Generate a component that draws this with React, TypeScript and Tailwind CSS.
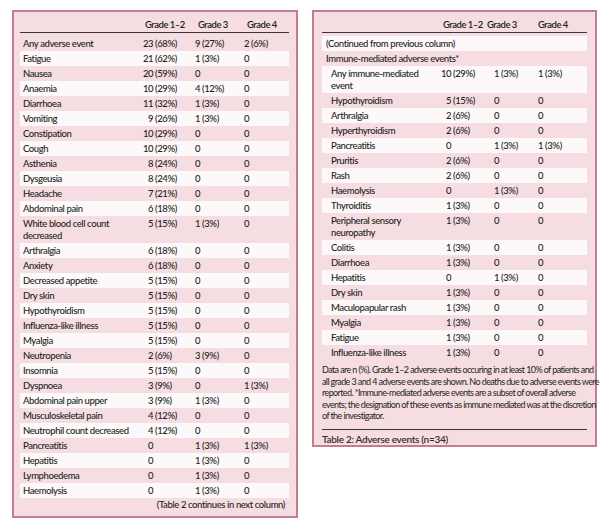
import React from "react";

type Row = [string, string, string, string];

const leftRows: Row[] = [
  ["Any adverse event", "23 (68%)", "9 (27%)", "2 (6%)"],
  ["Fatigue", "21 (62%)", "1 (3%)", "0"],
  ["Nausea", "20 (59%)", "0", "0"],
  ["Anaemia", "10 (29%)", "4 (12%)", "0"],
  ["Diarrhoea", "11 (32%)", "1 (3%)", "0"],
  ["Vomiting", "9 (26%)", "1 (3%)", "0"],
  ["Constipation", "10 (29%)", "0", "0"],
  ["Cough", "10 (29%)", "0", "0"],
  ["Asthenia", "8 (24%)", "0", "0"],
  ["Dysgeusia", "8 (24%)", "0", "0"],
  ["Headache", "7 (21%)", "0", "0"],
  ["Abdominal pain", "6 (18%)", "0", "0"],
  ["White blood cell count|decreased", "5 (15%)", "1 (3%)", "0"],
  ["Arthralgia", "6 (18%)", "0", "0"],
  ["Anxiety", "6 (18%)", "0", "0"],
  ["Decreased appetite", "5 (15%)", "0", "0"],
  ["Dry skin", "5 (15%)", "0", "0"],
  ["Hypothyroidism", "5 (15%)", "0", "0"],
  ["Influenza-like illness", "5 (15%)", "0", "0"],
  ["Myalgia", "5 (15%)", "0", "0"],
  ["Neutropenia", "2 (6%)", "3 (9%)", "0"],
  ["Insomnia", "5 (15%)", "0", "0"],
  ["Dyspnoea", "3 (9%)", "0", "1 (3%)"],
  ["Abdominal pain upper", "3 (9%)", "1 (3%)", "0"],
  ["Musculoskeletal pain", "4 (12%)", "0", "0"],
  ["Neutrophil count decreased", "4 (12%)", "0", "0"],
  ["Pancreatitis", "0", "1 (3%)", "1 (3%)"],
  ["Hepatitis", "0", "1 (3%)", "0"],
  ["Lymphoedema", "0", "1 (3%)", "0"],
  ["Haemolysis", "0", "1 (3%)", "0"],
];

const rightRows: Row[] = [
  ["Any immune-mediated|event", "10 (29%)", "1 (3%)", "1 (3%)"],
  ["Hypothyroidism", "5 (15%)", "0", "0"],
  ["Arthralgia", "2 (6%)", "0", "0"],
  ["Hyperthyroidism", "2 (6%)", "0", "0"],
  ["Pancreatitis", "0", "1 (3%)", "1 (3%)"],
  ["Pruritis", "2 (6%)", "0", "0"],
  ["Rash", "2 (6%)", "0", "0"],
  ["Haemolysis", "0", "1 (3%)", "0"],
  ["Thyroiditis", "1 (3%)", "0", "0"],
  ["Peripheral sensory|neuropathy", "1 (3%)", "0", "0"],
  ["Colitis", "1 (3%)", "0", "0"],
  ["Diarrhoea", "1 (3%)", "0", "0"],
  ["Hepatitis", "0", "1 (3%)", "0"],
  ["Dry skin", "1 (3%)", "0", "0"],
  ["Maculopapular rash", "1 (3%)", "0", "0"],
  ["Myalgia", "1 (3%)", "0", "0"],
  ["Fatigue", "1 (3%)", "0", "0"],
  ["Influenza-like illness", "1 (3%)", "0", "0"],
];

const footnote = [
  "Data are n (%). Grade 1–2 adverse events occuring in at least 10% of patients and",
  "all grade 3 and 4 adverse events are shown. No deaths due to adverse events were",
  "reported. *Immune-mediated adverse events are a subset of overall adverse",
  "events; the designation of these events as immune mediated was at the discretion",
  "of the investigator.",
];

// number right-aligned on a tab, percentage follows
const Count = ({ value }: { value: string }) => {
  const [n, ...rest] = value.split(" ");
  return (
    <span className="flex">
      <span className="w-[10px] text-right">{n}</span>
      {rest.length > 0 && <span className="pl-[2px]">{rest.join(" ")}</span>}
    </span>
  );
};

const Label = ({ text }: { text: string }) => (
  <span>
    {text.split("|").map((t, i) => (
      <span key={i} className="block">
        {t}
      </span>
    ))}
  </span>
);

const LeftTable = () => (
  <div className="w-[286px] h-[508px] border-2 border-[#c27e8c] bg-[#f5dde1] pl-[6px] pr-[7px] pt-[5px] flex flex-col">
    <div className="grid grid-cols-[123px_52px_49px_1fr] pl-[3px] leading-[12px] py-[1.5px] font-semibold tracking-[-0.5px] text-[#221e20] border-b border-[#3a3536]">
      <span />
      <span className="-ml-[1px]">Grade 1–2</span>
      <span>Grade 3</span>
      <span>Grade 4</span>
    </div>
    <div className="mt-[3px] flex flex-col">
      {leftRows.map((r, i) => (
        <div
          key={i}
          className={`grid grid-cols-[120px_52px_49px_1fr] pl-[3px] leading-[12px] py-[1.5px] ${
            i % 2 === 1 ? "bg-[#fdf8f9]" : ""
          }`}
        >
          <Label text={r[0]} />
          <Count value={r[1]} />
          <span>{r[2]}</span>
          <span>{r[3]}</span>
        </div>
      ))}
    </div>
    <div className="text-right pr-[4px] leading-[12px] mt-[1px]">(Table 2 continues in next column)</div>
  </div>
);

const RightTable = () => (
  <div className="w-[285px] h-[437px] border-2 border-[#c27e8c] bg-[#f5dde1] px-[8px] pt-[5px] flex flex-col">
    <div className="grid grid-cols-[121px_44px_51px_1fr] leading-[12px] py-[1.5px] font-semibold tracking-[-0.5px] text-[#221e20] border-b border-[#3a3536]">
      <span />
      <span>Grade 1–2</span>
      <span>Grade 3</span>
      <span>Grade 4</span>
    </div>
    <div className="mt-[3px] flex flex-col">
      <div className="leading-[12px] py-[1.5px] pl-[4px] bg-[#fdf8f9]">(Continued from previous column)</div>
      <div className="leading-[12px] py-[1.5px] pl-[4px]">Immune-mediated adverse events*</div>
      {rightRows.map((r, i) => (
        <div
          key={i}
          className={`grid grid-cols-[121px_47px_48px_1fr] leading-[12px] py-[1.5px] ${
            i % 2 === 0 ? "bg-[#fdf8f9]" : ""
          }`}
        >
          <span className="pl-[9px]">
            <Label text={r[0]} />
          </span>
          <span className="-ml-[2px]">
            <Count value={r[1]} />
          </span>
          <span className="pl-[4px]">{r[2]}</span>
          <span>{r[3]}</span>
        </div>
      ))}
    </div>
    <div className="mt-[4px] leading-[11.5px] text-[9px] font-normal tracking-[-0.6px]">
      {footnote.map((l, i) => (
        <div key={i} className="whitespace-nowrap">
          {l}
        </div>
      ))}
    </div>
    <div className="mt-[7px] border-t border-[#3a3536] pt-[3px] leading-[12px] text-[10px] font-semibold tracking-[-0.3px] text-[#3a2a30]">
      Table 2: Adverse events (n=34)
    </div>
  </div>
);

export default function App() {
  return (
    <div className="w-[612px] h-[525px] bg-white overflow-hidden font-['Lato',sans-serif] font-medium text-[9.5px] tracking-[-0.4px] text-[#231f21]">
      <div className="flex items-start gap-[14px] pt-[10px] pl-[12px]">
        <LeftTable />
        <RightTable />
      </div>
    </div>
  );
}
